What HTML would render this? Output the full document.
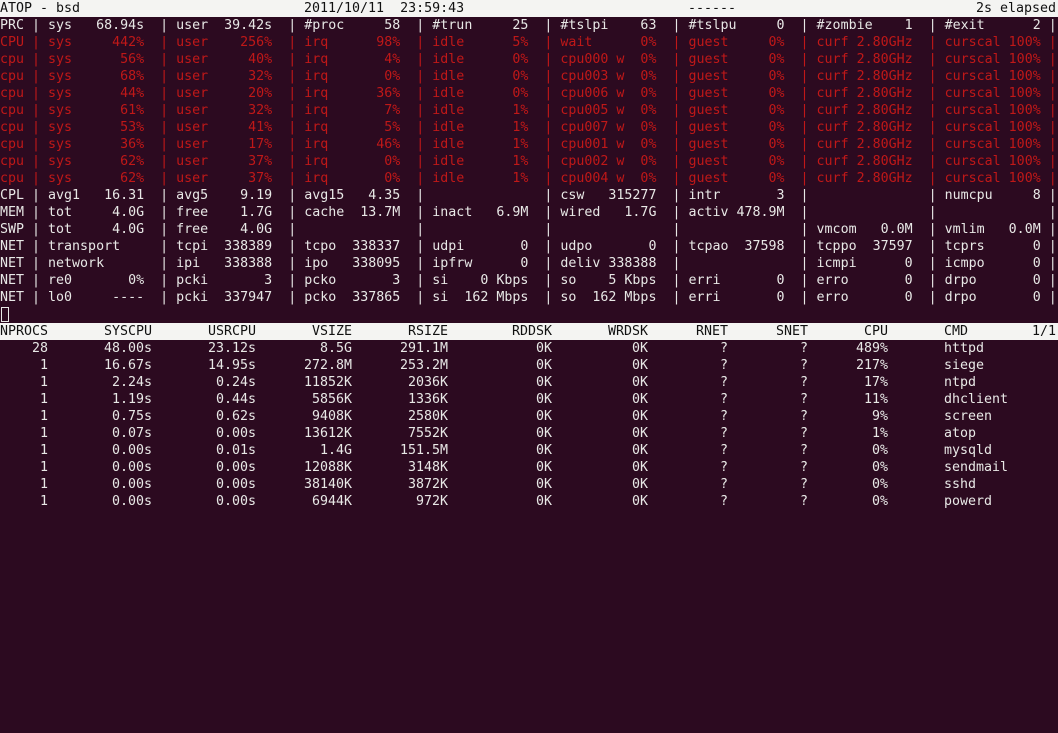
<!DOCTYPE html>
<html><head><meta charset="utf-8"><style>
html,body{margin:0;padding:0;background:#2c0a20;width:1058px;height:733px;overflow:hidden}
body{font-family:"DejaVu Sans Mono","Liberation Mono",monospace;font-size:13.3px;line-height:17px;color:#e8e8e6}
.l{height:17px;white-space:pre;position:relative}
.inv{background:#f4f4f2;color:#111}
.r{color:#c01818}
.c{display:inline-block;text-align:right;white-space:pre}
.a{position:absolute;top:0}
.cur{position:absolute;left:1px;top:1px;width:8px;height:15px;border:1px solid #e8e8e6;box-sizing:border-box}
</style></head><body>
<div class="l inv"><span class="a" style="left:0">ATOP - bsd</span><span class="a" style="left:304px">2011/10/11  23:59:43</span><span class="a" style="left:688px">------</span><span class="a" style="left:976px">2s elapsed</span></div>
<div class="l">PRC | sys   68.94s  | user  39.42s  | #proc     58  | #trun     25  | #tslpi    63  | #tslpu     0  | #zombie    1  | #exit      2 |</div>
<div class="l r">CPU | sys     442%  | user    256%  | irq      98%  | idle      5%  | wait      0%  | guest     0%  | curf 2.80GHz  | curscal 100% |</div>
<div class="l r">cpu | sys      56%  | user     40%  | irq       4%  | idle      0%  | cpu000 w  0%  | guest     0%  | curf 2.80GHz  | curscal 100% |</div>
<div class="l r">cpu | sys      68%  | user     32%  | irq       0%  | idle      0%  | cpu003 w  0%  | guest     0%  | curf 2.80GHz  | curscal 100% |</div>
<div class="l r">cpu | sys      44%  | user     20%  | irq      36%  | idle      0%  | cpu006 w  0%  | guest     0%  | curf 2.80GHz  | curscal 100% |</div>
<div class="l r">cpu | sys      61%  | user     32%  | irq       7%  | idle      1%  | cpu005 w  0%  | guest     0%  | curf 2.80GHz  | curscal 100% |</div>
<div class="l r">cpu | sys      53%  | user     41%  | irq       5%  | idle      1%  | cpu007 w  0%  | guest     0%  | curf 2.80GHz  | curscal 100% |</div>
<div class="l r">cpu | sys      36%  | user     17%  | irq      46%  | idle      1%  | cpu001 w  0%  | guest     0%  | curf 2.80GHz  | curscal 100% |</div>
<div class="l r">cpu | sys      62%  | user     37%  | irq       0%  | idle      1%  | cpu002 w  0%  | guest     0%  | curf 2.80GHz  | curscal 100% |</div>
<div class="l r">cpu | sys      62%  | user     37%  | irq       0%  | idle      1%  | cpu004 w  0%  | guest     0%  | curf 2.80GHz  | curscal 100% |</div>
<div class="l">CPL | avg1   16.31  | avg5    9.19  | avg15   4.35  |               | csw   315277  | intr       3  |               | numcpu     8 |</div>
<div class="l">MEM | tot     4.0G  | free    1.7G  | cache  13.7M  | inact   6.9M  | wired   1.7G  | activ 478.9M  |               |              |</div>
<div class="l">SWP | tot     4.0G  | free    4.0G  |               |               |               |               | vmcom   0.0M  | vmlim   0.0M |</div>
<div class="l">NET | transport     | tcpi  338389  | tcpo  338337  | udpi       0  | udpo       0  | tcpao  37598  | tcppo  37597  | tcprs      0 |</div>
<div class="l">NET | network       | ipi   338388  | ipo   338095  | ipfrw      0  | deliv 338388  |               | icmpi      0  | icmpo      0 |</div>
<div class="l">NET | re0       0%  | pcki       3  | pcko       3  | si    0 Kbps  | so    5 Kbps  | erri       0  | erro       0  | drpo       0 |</div>
<div class="l">NET | lo0     ----  | pcki  337947  | pcko  337865  | si  162 Mbps  | so  162 Mbps  | erri       0  | erro       0  | drpo       0 |</div>
<div class="l"><div class="cur"></div></div>
<div class="l inv"><span class="a" style="left:0">NPROCS</span><span class="a" style="left:104px">SYSCPU</span><span class="a" style="left:208px">USRCPU</span><span class="a" style="left:312px">VSIZE</span><span class="a" style="left:408px">RSIZE</span><span class="a" style="left:512px">RDDSK</span><span class="a" style="left:608px">WRDSK</span><span class="a" style="left:696px">RNET</span><span class="a" style="left:776px">SNET</span><span class="a" style="left:864px">CPU</span><span class="a" style="left:944px">CMD</span><span class="a" style="left:1032px">1/1</span></div>
<div class="l"><span class="c" style="width:48px">28</span><span class="c" style="width:104px">48.00s</span><span class="c" style="width:104px">23.12s</span><span class="c" style="width:96px">8.5G</span><span class="c" style="width:96px">291.1M</span><span class="c" style="width:104px">0K</span><span class="c" style="width:96px">0K</span><span class="c" style="width:80px">?</span><span class="c" style="width:80px">?</span><span class="c" style="width:80px">489%</span><span class="c" style="width:56px"></span>httpd</div>
<div class="l"><span class="c" style="width:48px">1</span><span class="c" style="width:104px">16.67s</span><span class="c" style="width:104px">14.95s</span><span class="c" style="width:96px">272.8M</span><span class="c" style="width:96px">253.2M</span><span class="c" style="width:104px">0K</span><span class="c" style="width:96px">0K</span><span class="c" style="width:80px">?</span><span class="c" style="width:80px">?</span><span class="c" style="width:80px">217%</span><span class="c" style="width:56px"></span>siege</div>
<div class="l"><span class="c" style="width:48px">1</span><span class="c" style="width:104px">2.24s</span><span class="c" style="width:104px">0.24s</span><span class="c" style="width:96px">11852K</span><span class="c" style="width:96px">2036K</span><span class="c" style="width:104px">0K</span><span class="c" style="width:96px">0K</span><span class="c" style="width:80px">?</span><span class="c" style="width:80px">?</span><span class="c" style="width:80px">17%</span><span class="c" style="width:56px"></span>ntpd</div>
<div class="l"><span class="c" style="width:48px">1</span><span class="c" style="width:104px">1.19s</span><span class="c" style="width:104px">0.44s</span><span class="c" style="width:96px">5856K</span><span class="c" style="width:96px">1336K</span><span class="c" style="width:104px">0K</span><span class="c" style="width:96px">0K</span><span class="c" style="width:80px">?</span><span class="c" style="width:80px">?</span><span class="c" style="width:80px">11%</span><span class="c" style="width:56px"></span>dhclient</div>
<div class="l"><span class="c" style="width:48px">1</span><span class="c" style="width:104px">0.75s</span><span class="c" style="width:104px">0.62s</span><span class="c" style="width:96px">9408K</span><span class="c" style="width:96px">2580K</span><span class="c" style="width:104px">0K</span><span class="c" style="width:96px">0K</span><span class="c" style="width:80px">?</span><span class="c" style="width:80px">?</span><span class="c" style="width:80px">9%</span><span class="c" style="width:56px"></span>screen</div>
<div class="l"><span class="c" style="width:48px">1</span><span class="c" style="width:104px">0.07s</span><span class="c" style="width:104px">0.00s</span><span class="c" style="width:96px">13612K</span><span class="c" style="width:96px">7552K</span><span class="c" style="width:104px">0K</span><span class="c" style="width:96px">0K</span><span class="c" style="width:80px">?</span><span class="c" style="width:80px">?</span><span class="c" style="width:80px">1%</span><span class="c" style="width:56px"></span>atop</div>
<div class="l"><span class="c" style="width:48px">1</span><span class="c" style="width:104px">0.00s</span><span class="c" style="width:104px">0.01s</span><span class="c" style="width:96px">1.4G</span><span class="c" style="width:96px">151.5M</span><span class="c" style="width:104px">0K</span><span class="c" style="width:96px">0K</span><span class="c" style="width:80px">?</span><span class="c" style="width:80px">?</span><span class="c" style="width:80px">0%</span><span class="c" style="width:56px"></span>mysqld</div>
<div class="l"><span class="c" style="width:48px">1</span><span class="c" style="width:104px">0.00s</span><span class="c" style="width:104px">0.00s</span><span class="c" style="width:96px">12088K</span><span class="c" style="width:96px">3148K</span><span class="c" style="width:104px">0K</span><span class="c" style="width:96px">0K</span><span class="c" style="width:80px">?</span><span class="c" style="width:80px">?</span><span class="c" style="width:80px">0%</span><span class="c" style="width:56px"></span>sendmail</div>
<div class="l"><span class="c" style="width:48px">1</span><span class="c" style="width:104px">0.00s</span><span class="c" style="width:104px">0.00s</span><span class="c" style="width:96px">38140K</span><span class="c" style="width:96px">3872K</span><span class="c" style="width:104px">0K</span><span class="c" style="width:96px">0K</span><span class="c" style="width:80px">?</span><span class="c" style="width:80px">?</span><span class="c" style="width:80px">0%</span><span class="c" style="width:56px"></span>sshd</div>
<div class="l"><span class="c" style="width:48px">1</span><span class="c" style="width:104px">0.00s</span><span class="c" style="width:104px">0.00s</span><span class="c" style="width:96px">6944K</span><span class="c" style="width:96px">972K</span><span class="c" style="width:104px">0K</span><span class="c" style="width:96px">0K</span><span class="c" style="width:80px">?</span><span class="c" style="width:80px">?</span><span class="c" style="width:80px">0%</span><span class="c" style="width:56px"></span>powerd</div>
</body></html>
